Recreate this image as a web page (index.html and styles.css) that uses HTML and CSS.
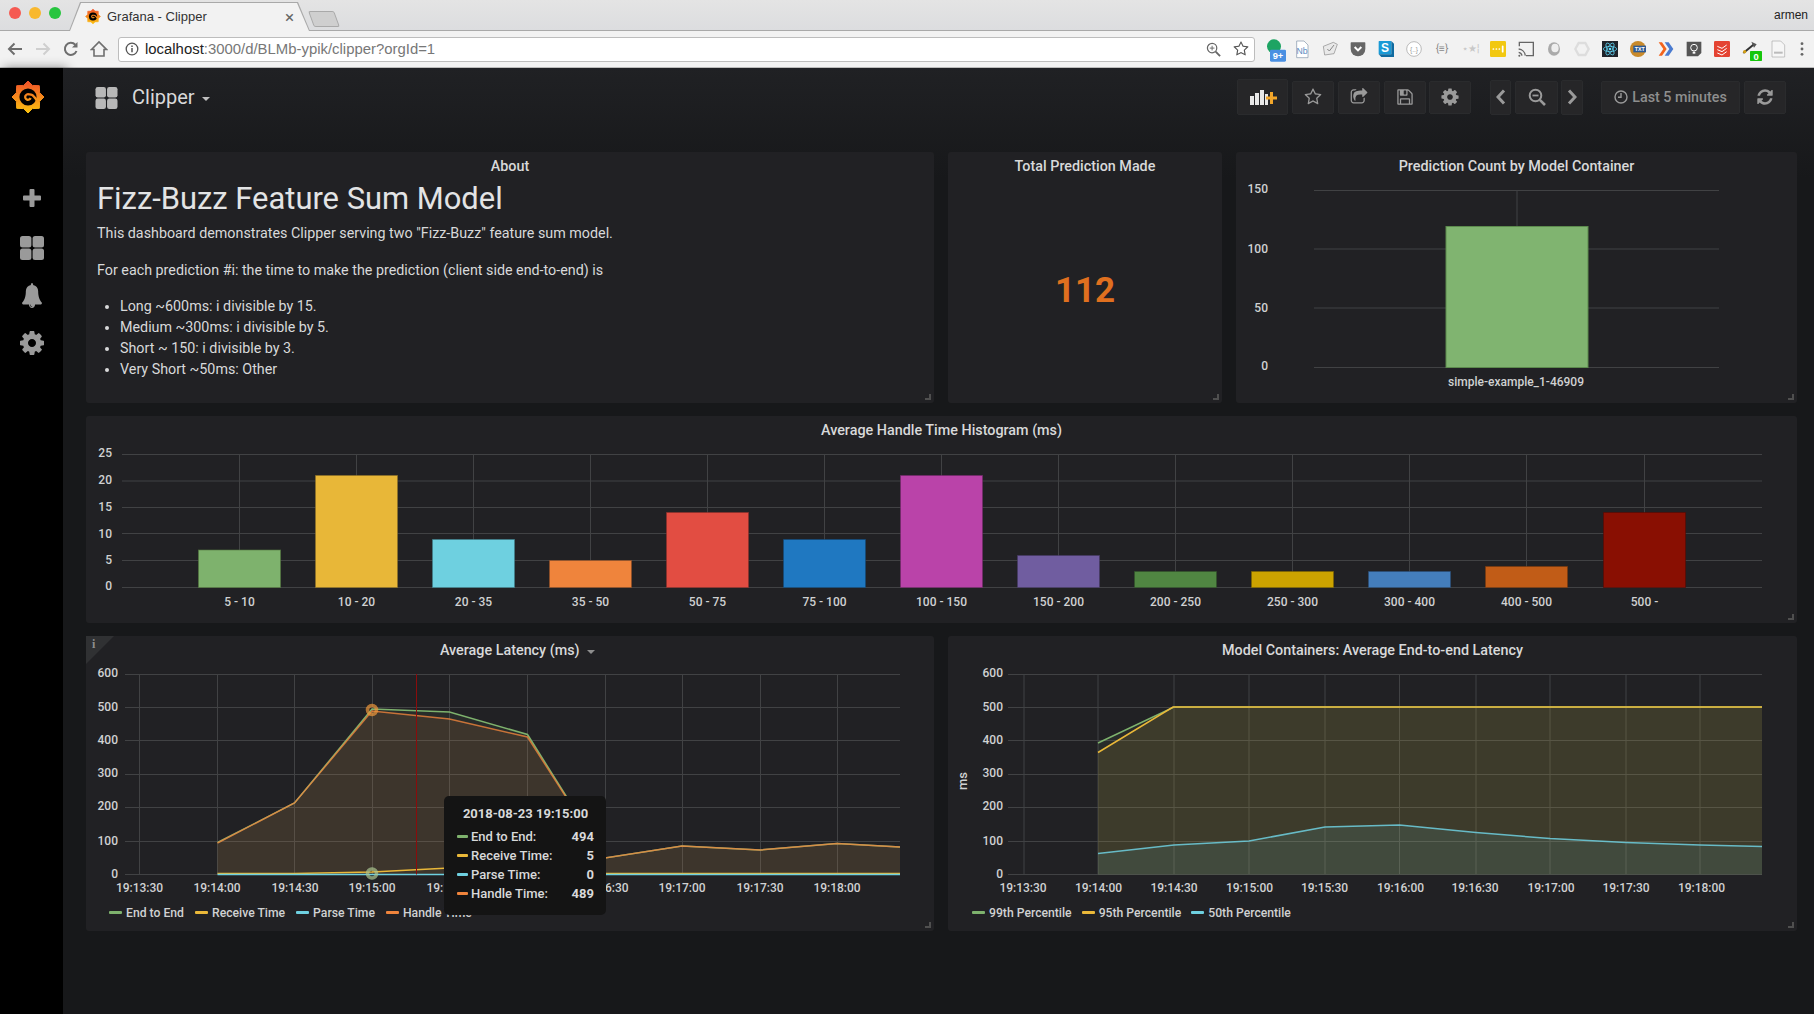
FILE: index.html
```html
<!DOCTYPE html>
<html lang="en">
  <head>
    <meta charset="UTF-8" />
    <title>Grafana - Clipper</title>
    <link rel="stylesheet" href="styles.css">
  </head>
  <body>
    <svg class="defs" width="0" height="0">
      <defs>
        <linearGradient id="logo-grad" gradientUnits="userSpaceOnUse" x1="0" y1="-16" x2="0" y2="16">
          <stop offset="0" stop-color="#f0502a" />
          <stop offset="1" stop-color="#fbc30f" />
        </linearGradient>
        <symbol id="i-logo" viewBox="-17 -17 34 34">
          <polygon fill="url(#logo-grad)" stroke="url(#logo-grad)" stroke-width="1" stroke-linejoin="round" points="0,-16 4.400,-11.600 11.300,-11.300 11.600,-4.400 16,0 11.600,4.400 11.300,11.300 4.400,11.600 0,16 -4.400,11.600 -11.300,11.300 -11.600,4.400 -16,0 -11.600,-4.400 -11.300,-11.300 -4.400,-11.600" />
          <circle r="8.600" fill="#000" />
          <path d="M2.600 1A2.800 2.800 0 1 1 1 -2.600A5.500 5.500 0 0 1 6.200 0A7 7 0 0 1 8.500 3.500" fill="none" stroke="url(#logo-grad)" stroke-width="2.300" />
        </symbol>
        <symbol id="i-cog" viewBox="0 0 1792 1792"><path d="M1152 896q0-106-75-181t-181-75-181 75-75 181 75 181 181 75 181-75 75-181zm512-109v222q0 12-8 23t-20 13l-185 28q-19 54-39 91 35 50 107 138 10 12 10 25t-9 23q-27 37-99 108t-94 71q-12 0-26-9l-138-108q-44 23-91 38-16 136-29 186-7 28-36 28h-222q-14 0-24.500-8.500t-11.500-21.500l-28-184q-49-16-90-37l-141 107q-10 9-25 9-14 0-25-11-126-114-165-168-7-10-7-23 0-12 8-23 15-21 51-66.500t54-70.500q-27-50-41-99l-183-27q-13-2-21-12.500t-8-23.500v-222q0-12 8-23t19-13l186-28q14-46 39-92-40-57-107-138-10-12-10-24 0-10 9-23 26-36 98.500-107.500t94.500-71.500q13 0 26 10l138 107q44-23 91-38 16-136 29-186 7-28 36-28h222q14 0 24.500 8.500t11.500 21.500l28 184q49 16 90 37l142-107q9-9 24-9 13 0 25 10 129 119 165 170 7 8 7 22 0 12-8 23-15 21-51 66.500t-54 70.500q26 50 41 98l183 28q13 2 21 12.500t8 23.500z" /></symbol>
        <symbol id="i-star" viewBox="0 0 1792 1792"><path d="M1201 1004l306-297-422-62-189-382-189 382-422 62 306 297-73 421 378-199 377 199zm527-357q0 22-26 48l-363 354 86 500q1 7 1 20 0 50-41 50-19 0-40-12l-449-236-449 236q-22 12-40 12-21 0-31.500-14.500t-10.500-35.500q0-6 2-20l86-500-364-354q-25-27-25-48 0-37 56-46l502-73 225-455q19-41 49-41t49 41l225 455 502 73q56 9 56 46z" /></symbol>
        <symbol id="i-squares" viewBox="0 0 24 24">
          <rect width="11.400" height="11.400" rx="2.500" />
          <rect x="12.600" width="11.400" height="11.400" rx="2.500" />
          <rect y="12.600" width="11.400" height="11.400" rx="2.500" />
          <rect x="12.600" y="12.600" width="11.400" height="11.400" rx="2.500" />
        </symbol>
      </defs>
    </svg>

    <div class="tabstrip">
      <div class="lights">
        <span class="light light-red"></span>
        <span class="light light-yellow"></span>
        <span class="light light-green"></span>
      </div>
      <div class="tab">
        <svg class="tab-icon"><use href="#i-logo" /></svg>
        <span class="tab-title">Grafana - Clipper</span>
        <span class="tab-close">×</span>
      </div>
      <div class="newtab"></div>
      <span class="profile">armen</span>
    </div>

    <div class="urlbar">
      <svg class="nav-icon" viewBox="0 0 18 18"><path d="M16 9H3M8.500 3.500L3 9l5.500 5.500" fill="none" stroke="#6e6e6e" stroke-width="2" /></svg>
      <svg class="nav-icon" viewBox="0 0 18 18"><path d="M2 9h13M9.500 3.500L15 9l-5.500 5.500" fill="none" stroke="#cfcfcf" stroke-width="2" /></svg>
      <svg class="nav-icon" viewBox="0 0 18 18"><path d="M14.500 11A6 6 0 1 1 13.300 4.800" fill="none" stroke="#6e6e6e" stroke-width="2" /><path d="M15.500 2v5.500H10z" fill="#6e6e6e" /></svg>
      <svg class="nav-icon" viewBox="0 0 18 18"><path d="M1.500 9.500L9 2l7.500 7.500H14V16H4V9.500z" fill="none" stroke="#6e6e6e" stroke-width="1.600" /></svg>
      <div class="omnibox">
        <svg class="omni-info" viewBox="0 0 14 14"><circle cx="7" cy="7" r="5.800" fill="none" stroke="#555" stroke-width="1.300" /><path d="M7 6v4.300M7 3.500v1.400" stroke="#555" stroke-width="1.500" /></svg>
        <span class="omni-url"><b>localhost</b>:3000/d/BLMb-ypik/clipper?orgId=1</span>
        <svg class="omni-zoom" viewBox="0 0 16 16"><circle cx="6.500" cy="6.500" r="5" fill="none" stroke="#666" stroke-width="1.300" /><path d="M10.300 10.300L15 15" stroke="#666" stroke-width="2" /><path d="M4 6.500h5M6.500 4v5" stroke="#666" /></svg>
        <svg class="omni-star"><use href="#i-star" /></svg>
      </div>
      <div class="extensions">
        <svg class="ext" viewBox="0 0 24 24"><circle cx="12" cy="8" r="10.500" fill="#1da463" /><rect x="6" y="13" width="24" height="18" rx="2" fill="#4a90e2" /><text class="ext-label" x="18" y="27" font-size="14">9+</text></svg>
        <svg class="ext" viewBox="0 0 24 24"><path d="M4 0h11l6 6v19H4z" fill="#fff" stroke="#7f93a8" /><text class="ext-label ext-label-blue" x="12" y="19" font-size="13">Nb</text></svg>
        <svg class="ext" viewBox="0 0 24 24"><path d="M2 8l15-6 6 3-5 14-14 2z" fill="#e9e9e9" stroke="#888" /><path d="M8 12l3 3 7-9" fill="none" stroke="#888" stroke-width="1.500" /></svg>
        <svg class="ext" viewBox="0 0 24 24"><path d="M2 2h20a1 1 0 0 1 1 1v9a11 11 0 0 1-22 0V3a1 1 0 0 1 1-1z" fill="#666" /><path d="M7 9l5 5 5-5" fill="none" stroke="#fff" stroke-width="3" /></svg>
        <svg class="ext" viewBox="0 0 24 24"><rect x="1" y="0" width="19" height="20" rx="1" fill="#1a9ad6" /><path d="M1 20h19V0l4 4v20H5z" fill="#0f6ba0" /><text class="ext-label" x="10.500" y="16" font-size="18">S</text></svg>
        <svg class="ext" viewBox="0 0 24 24"><circle cx="12" cy="12" r="11" fill="#fff" stroke="#bbb" stroke-width="1.500" /><text class="ext-label ext-label-gray" x="12" y="16" font-size="10">{..}</text></svg>
        <span class="ext ext-text">{≡}</span>
        <span class="ext ext-text ext-faint">⋆★¦</span>
        <svg class="ext" viewBox="0 0 24 24"><rect x="0" y="0" width="24" height="24" rx="2" fill="#f2c811" /><path d="M5 12h.1M9.500 12h.1M14 12h.1M19 8v8" stroke="#fff" stroke-width="2.600" stroke-linecap="round" /></svg>
        <svg class="ext" viewBox="0 0 24 24"><path d="M2 8V2h21v20H12" fill="none" stroke="#666" stroke-width="2" /><path d="M1 12a11 11 0 0 1 10 10M1 17a6 6 0 0 1 5 5" fill="none" stroke="#666" stroke-width="2" /><circle cx="2" cy="22" r="1.500" fill="#666" /></svg>
        <svg class="ext" viewBox="0 0 24 24"><ellipse cx="12" cy="12" rx="9" ry="10" fill="#aaa" /><ellipse cx="13.500" cy="10.500" rx="5.500" ry="6.500" fill="#eee" /></svg>
        <svg class="ext" viewBox="0 0 24 24"><polygon points="7,3 17,3 22,12 17,21 7,21 2,12" fill="none" stroke="#ddd" stroke-width="3.500" /></svg>
        <svg class="ext" viewBox="0 0 24 24"><rect x="0" y="0" width="24" height="24" fill="#20232a" /><g fill="none" stroke="#61dafb" stroke-width="1.100"><ellipse cx="12" cy="12" rx="10" ry="4" /><ellipse cx="12" cy="12" rx="10" ry="4" transform="rotate(60 12 12)" /><ellipse cx="12" cy="12" rx="10" ry="4" transform="rotate(120 12 12)" /></g><circle cx="12" cy="12" r="2" fill="#61dafb" /></svg>
        <svg class="ext" viewBox="0 0 24 24"><circle cx="12" cy="12" r="12" fill="#c98a2b" /><rect x="5" y="7" width="19" height="10" fill="#2f5b94" /><text class="ext-label" x="14.500" y="15" font-size="8">TXT</text></svg>
        <svg class="ext" viewBox="0 0 24 24"><path d="M1 2l7 10-7 10h5l7-10-7-10z" fill="#f2631c" /><path d="M10 2l7 10-7 10h6l7-10-7-10z" fill="#4a7bd0" /></svg>
        <svg class="ext" viewBox="0 0 24 24"><path d="M1 1h22v17l-5 5H1z" fill="#555" /><circle cx="12" cy="10" r="5" fill="none" stroke="#fff" stroke-width="1.500" /><path d="M10 16h4v3h-4z" fill="#fff" /></svg>
        <svg class="ext" viewBox="0 0 24 24"><rect x="0" y="0" width="24" height="24" rx="2" fill="#e44332" /><path d="M5 8l7 3 7-5M5 13l7 3 7-5M5 18l7 3 7-5" fill="none" stroke="#fff" stroke-width="1.500" /></svg>
        <svg class="ext" viewBox="0 0 24 24"><path d="M2 18L18 5" stroke="#333" stroke-width="3" /><path d="M14 1l8 4-4 5z" fill="#555" /><circle cx="4" cy="16" r="2.500" fill="#d4a017" /><rect x="12" y="15" width="18" height="15" rx="1" fill="#16c60c" /><text class="ext-label" x="21" y="28" font-size="14">0</text></svg>
        <svg class="ext" viewBox="0 0 24 24"><path d="M3 0h13l6 6v18H3z" fill="#f6f6f6" stroke="#aaa" /><rect x="6" y="16" width="13" height="3" fill="#bbb" /></svg>
        <svg class="ext-menu" viewBox="0 0 4 18"><circle cx="2" cy="3" r="1.600" fill="#666" /><circle cx="2" cy="9" r="1.600" fill="#666" /><circle cx="2" cy="15" r="1.600" fill="#666" /></svg>
      </div>
    </div>

    <div class="app">
      <aside class="sidemenu">
        <svg class="side-logo"><use href="#i-logo" /></svg>
        <svg class="side-icon side-plus" viewBox="0 0 18 18"><path d="M7.500 1h3v6.500H17v3h-6.500V17h-3v-6.500H1v-3h6.500z" stroke="#9a9a9a" stroke-width="2" stroke-linejoin="round" /></svg>
        <svg class="side-icon side-squares"><use href="#i-squares" /></svg>
        <svg class="side-icon side-bell" viewBox="64 0 1664 1792" preserveAspectRatio="none"><path d="M912 1696q0-16-16-16-59 0-101.500-42.500t-42.500-101.500q0-16-16-16t-16 16q0 73 51.500 124.500t124.500 51.500q16 0 16-16zm816-288q0 52-38 90t-90 38h-448q0 106-75 181t-181 75-181-75-75-181h-448q-52 0-90-38t-38-90q50-42 91-88t85-119.500 74.500-158.500 50-206 19.500-260q0-152 117-282.500t307-158.500q-8-19-8-39 0-40 28-68t68-28 68 28 28 68q0 20-8 39 190 28 307 158.500t117 282.500q0 139 19.500 260t50 206 74.500 158.500 85 119.500 91 88z" /></svg>
        <svg class="side-icon side-cog"><use href="#i-cog" /></svg>
      </aside>

      <main class="main">
        <header class="navbar">
          <svg class="nav-squares"><use href="#i-squares" /></svg>
          <span class="dash-title">Clipper</span>
          <span class="caret"></span>
          <div class="nav-actions">
            <button class="btn btn-add">
              <svg width="28" height="16" viewBox="0 0 28 16"><path d="M1 7h4v9H1zM6 4h4v12H6zM11 1h4v15h-4zM16 5h3v11h-3z" fill="#e8e8e8" /><path d="M21 3h3v4.500h4v3h-4V15h-3v-4.500h-4v-3h4z" fill="#f2a62a" /></svg>
            </button>
            <button class="btn btn-star"><svg class="btn-icon"><use href="#i-star" /></svg></button>
            <button class="btn btn-share"><svg class="btn-icon" viewBox="0 0 1792 1792"><path d="M1472 989v259q0 119-84.500 203.500t-203.500 84.500h-832q-119 0-203.500-84.500t-84.500-203.500v-832q0-119 84.500-203.500t203.500-84.500h255q13 0 22.500 9.500t9.500 22.500q0 27-26 32-77 26-133 60-10 4-16 4h-112q-66 0-113 47t-47 113v832q0 66 47 113t113 47h832q66 0 113-47t47-113v-214q0-19 18-29 28-13 54-37 16-16 35-8 21 9 21 29zm237-496l-384 384q-18 19-45 19-12 0-25-5-39-17-39-59v-192h-160q-323 0-438 131-119 137-74 473 3 23-20 34-8 2-12 2-16 0-26-13-10-14-21-31t-39.500-68.500-49.500-99.500-38.500-114-17.500-122q0-49 3.500-91t14-90 28-88 47-81.500 68.500-74 94.500-61.500 124.500-48.500 159.500-30.500 196.500-11h160v-192q0-42 39-59 13-5 25-5 26 0 45 19l384 384q19 19 19 45t-19 45z" /></svg></button>
            <button class="btn btn-save"><svg class="btn-icon" viewBox="0 0 1792 1792"><path d="M512 1536h768v-384h-768v384zm896 0h128v-896q0-14-10-38.500t-20-34.500l-281-281q-10-10-34-20t-39-10v416q0 40-28 68t-68 28h-576q-40 0-68-28t-28-68v-416h-128v1280h128v-416q0-40 28-68t68-28h832q40 0 68 28t28 68v416zm-384-928v-320q0-13-9.500-22.500t-22.500-9.500h-192q-13 0-22.500 9.500t-9.500 22.500v320q0 13 9.500 22.500t22.500 9.500h192q13 0 22.500-9.500t9.500-22.500zm640 32v928q0 40-28 68t-68 28h-1344q-40 0-68-28t-28-68v-1344q0-40 28-68t68-28h928q40 0 88 20t76 48l280 280q28 28 48 76t20 88z" /></svg></button>
            <button class="btn btn-cog"><svg class="btn-icon btn-icon-big"><use href="#i-cog" /></svg></button>
            <button class="btn btn-prev"><svg width="10" height="16" viewBox="0 0 10 16"><path d="M8 1.500L2 8l6 6.500" fill="none" stroke="#9a9a9a" stroke-width="3" /></svg></button>
            <button class="btn btn-zoom"><svg width="18" height="18" viewBox="0 0 18 18"><circle cx="7.500" cy="7.500" r="5.800" fill="none" stroke="#9a9a9a" stroke-width="2" /><path d="M11.800 11.800L17 17" stroke="#9a9a9a" stroke-width="2.600" /><path d="M4.500 7.500h6" stroke="#9a9a9a" stroke-width="1.800" /></svg></button>
            <button class="btn btn-next"><svg width="10" height="16" viewBox="0 0 10 16"><path d="M2 1.500L8 8l-6 6.500" fill="none" stroke="#9a9a9a" stroke-width="3" /></svg></button>
            <button class="btn btn-time">
              <svg width="14" height="14" viewBox="0 0 14 14"><circle cx="7" cy="7" r="6" fill="none" stroke="#9a9a9a" stroke-width="1.400" /><path d="M7 3v4.300H4" fill="none" stroke="#9a9a9a" stroke-width="1.400" /></svg>
              Last 5 minutes
            </button>
            <button class="btn btn-refresh"><svg class="btn-icon" viewBox="0 0 1792 1792"><path d="M1639 1056q0 5-1 7-64 268-268 434.500t-478 166.500q-146 0-282.500-55t-243.500-157l-129 129q-19 19-45 19t-45-19-19-45v-448q0-26 19-45t45-19h448q26 0 45 19t19 45-19 45l-137 137q71 66 161 102t187 36q134 0 250-65t186-179q11-17 53-117 8-23 30-23h192q13 0 22.500 9.500t9.500 22.500zm25-800v448q0 26-19 45t-45 19h-448q-26 0-45-19t-19-45 19-45l138-138q-148-137-349-137-134 0-250 65t-186 179q-11 17-53 117-8 23-30 23h-199q-13 0-22.500-9.500t-9.500-22.500v-7q65-268 270-434.500t480-166.500q146 0 284 55.500t245 156.500l130-129q19-19 45-19t45 19 19 45z" /></svg></button>
          </div>
        </header>

        <div class="dashboard">
          <div class="row row-top">
            <section class="panel">
              <h3 class="panel-title">About</h3>
              <div class="about">
                <h1>Fizz-Buzz Feature Sum Model</h1>
                <p>This dashboard demonstrates Clipper serving two "Fizz-Buzz" feature sum model.</p>
                <p>For each prediction #i: the time to make the prediction (client side end-to-end) is</p>
                <ul>
                  <li>Long ~600ms: i divisible by 15.</li>
                  <li>Medium ~300ms: i divisible by 5.</li>
                  <li>Short ~ 150: i divisible by 3.</li>
                  <li>Very Short ~50ms: Other</li>
                </ul>
              </div>
            </section>

            <section class="panel panel-stat">
              <h3 class="panel-title">Total Prediction Made</h3>
              <div class="stat-value">112</div>
            </section>

            <section class="panel">
              <h3 class="panel-title">Prediction Count by Model Container</h3>
              <svg class="chart chart-count" viewBox="1236 180 561 210">
                <path class="grid" d="M1314 190.500H1719M1314 249H1719M1314 308H1719M1314 367.500H1719M1517 190.500V367" />
                <rect x="1446" y="226.500" width="142" height="141" fill="#80b470" stroke="#5c8a4d" />
                <text class="tick" x="1268" y="193" text-anchor="end">150</text>
                <text class="tick" x="1268" y="253" text-anchor="end">100</text>
                <text class="tick" x="1268" y="312" text-anchor="end">50</text>
                <text class="tick" x="1268" y="370" text-anchor="end">0</text>
                <text class="tick" x="1516" y="386" text-anchor="middle">simple-example_1-46909</text>
              </svg>
            </section>
          </div>

          <div class="row row-hist">
            <section class="panel">
              <h3 class="panel-title">Average Handle Time Histogram (ms)</h3>
              <svg class="chart chart-hist" viewBox="86 440 1711 183">
                <path class="grid" d="M122 454.500H1762M122 481H1762M122 507.500H1762M122 533.500H1762M122 560.500H1762M122 587.500H1762" />
                <path class="grid" d="M239.500 454V587M356.500 454V587M473.500 454V587M590.500 454V587M707.500 454V587M824.500 454V587M941.500 454V587M1058.500 454V587M1175.500 454V587M1292.500 454V587M1409.500 454V587M1526.500 454V587M1644.500 454V587" />
                <g stroke-opacity=".6">
                  <rect x="198.500" y="550" width="82" height="37.500" fill="#7eb26d" stroke="#55783f" />
                  <rect x="315.500" y="475.500" width="82" height="112" fill="#e8b738" stroke="#8f7226" />
                  <rect x="432.500" y="539.500" width="82" height="48" fill="#6ed0e0" stroke="#40808c" />
                  <rect x="549.500" y="560.500" width="82" height="27" fill="#ef843c" stroke="#8f4f24" />
                  <rect x="666.500" y="512.500" width="82" height="75" fill="#e24d42" stroke="#8f3029" />
                  <rect x="783.500" y="539.500" width="82" height="48" fill="#1f78c1" stroke="#134a78" />
                  <rect x="900.500" y="475.500" width="82" height="112" fill="#ba43a9" stroke="#752a6a" />
                  <rect x="1017.500" y="555.500" width="82" height="32" fill="#705da0" stroke="#463a64" />
                  <rect x="1134.500" y="571.500" width="82" height="16" fill="#508642" stroke="#325429" />
                  <rect x="1251.500" y="571.500" width="82" height="16" fill="#cca300" stroke="#806600" />
                  <rect x="1368.500" y="571.500" width="82" height="16" fill="#447ebc" stroke="#2a4f76" />
                  <rect x="1485.500" y="566.500" width="82" height="21" fill="#c15c17" stroke="#793a0e" />
                  <rect x="1603.500" y="512.500" width="82" height="75" fill="#890f02" stroke="#560901" />
                </g>
                <g class="tick" text-anchor="end">
                  <text x="112" y="457">25</text>
                  <text x="112" y="484">20</text>
                  <text x="112" y="511">15</text>
                  <text x="112" y="538">10</text>
                  <text x="112" y="564">5</text>
                  <text x="112" y="590">0</text>
                </g>
                <g class="tick" text-anchor="middle">
                  <text x="239.500" y="606">5 - 10</text>
                  <text x="356.500" y="606">10 - 20</text>
                  <text x="473.500" y="606">20 - 35</text>
                  <text x="590.500" y="606">35 - 50</text>
                  <text x="707.500" y="606">50 - 75</text>
                  <text x="824.500" y="606">75 - 100</text>
                  <text x="941.500" y="606">100 - 150</text>
                  <text x="1058.500" y="606">150 - 200</text>
                  <text x="1175.500" y="606">200 - 250</text>
                  <text x="1292.500" y="606">250 - 300</text>
                  <text x="1409.500" y="606">300 - 400</text>
                  <text x="1526.500" y="606">400 - 500</text>
                  <text x="1644.500" y="606">500 -</text>
                </g>
              </svg>
            </section>
          </div>

          <div class="row row-bottom">
            <section class="panel">
              <span class="corner-info"><span class="corner-i">i</span></span>
              <h3 class="panel-title">Average Latency (ms) <span class="title-caret"></span></h3>
              <svg class="chart chart-line" viewBox="86 664 848 232">
                <path class="grid" d="M125 674.500H900M125 707.500H900M125 740.500H900M125 774.500H900M125 807.500H900M125 841.500H900M125 874.500H900" />
                <path class="grid" d="M139.500 674V874M217.500 674V874M294.500 674V874M372.500 674V874M449.500 674V874M527.500 674V874M605.500 674V874M682.500 674V874M760.500 674V874M837.500 674V874" />
                <path d="M217.500 842.500L294.500 803L372 709L449.500 712L527.500 734.500L605 858L682 846L760 850L837 843.500L900 847V874.500H217.500z" fill="#7eb26d" fill-opacity=".08" />
                <path d="M217.500 843L294.500 803L372 711L449.500 719L527.500 737L605 858L682 846L760 850L837 843.500L900 847V874.500H217.500z" fill="#ef843c" fill-opacity=".11" />
                <path d="M217.500 842.500L294.500 803L372 709L449.500 712L527.500 734.500L605 858L682 846L760 850L837 843.500L900 847" fill="none" stroke="#7eb26d" stroke-width="1.500" />
                <path d="M217.500 873.500L294.500 873.500L372 872L449.500 868L527.500 866L605 873.500H900" fill="none" stroke="#eab839" stroke-width="1.500" />
                <path d="M217.500 874.500H900" fill="none" stroke="#6ed0e0" stroke-width="1.500" />
                <path d="M217.500 843L294.500 803L372 711L449.500 719L527.500 737L605 858L682 846L760 850L837 843.500L900 847" fill="none" stroke="#ef843c" stroke-opacity=".8" stroke-width="1.500" />
                <path d="M416.500 674V874.500" stroke="#8a0c0c" />
                <circle cx="372" cy="710" r="4.500" fill="none" stroke="#eab839" stroke-opacity=".45" stroke-width="3.500" />
                <circle cx="372" cy="710" r="4.500" fill="none" stroke="#ef843c" stroke-opacity=".45" stroke-width="3.500" />
                <circle cx="372" cy="873.500" r="4.500" fill="none" stroke="#6ed0e0" stroke-opacity=".55" stroke-width="3.500" />
                <circle cx="372" cy="873.500" r="4.500" fill="none" stroke="#eab839" stroke-opacity=".35" stroke-width="3.500" />
                <g class="tick" text-anchor="end">
                  <text x="118" y="677">600</text>
                  <text x="118" y="711">500</text>
                  <text x="118" y="744">400</text>
                  <text x="118" y="777">300</text>
                  <text x="118" y="810">200</text>
                  <text x="118" y="845">100</text>
                  <text x="118" y="878">0</text>
                </g>
                <g class="tick" text-anchor="middle">
                  <text x="139.500" y="892">19:13:30</text>
                  <text x="217" y="892">19:14:00</text>
                  <text x="295" y="892">19:14:30</text>
                  <text x="372" y="892">19:15:00</text>
                  <text x="450" y="892">19:15:30</text>
                  <text x="527.500" y="892">19:16:00</text>
                  <text x="605" y="892">19:16:30</text>
                  <text x="682" y="892">19:17:00</text>
                  <text x="760" y="892">19:17:30</text>
                  <text x="837" y="892">19:18:00</text>
                </g>
              </svg>
              <div class="legend legend-left">
                <span class="legend-item"><i class="dash dash-green"></i>End to End</span>
                <span class="legend-item"><i class="dash dash-yellow"></i>Receive Time</span>
                <span class="legend-item"><i class="dash dash-cyan"></i>Parse Time</span>
                <span class="legend-item"><i class="dash dash-orange"></i>Handle Time</span>
              </div>
              <div class="graph-tooltip">
                <div class="tooltip-date">2018-08-23 19:15:00</div>
                <div class="tooltip-row"><i class="dash dash-green"></i><span class="tooltip-name">End to End:</span><b>494</b></div>
                <div class="tooltip-row"><i class="dash dash-yellow"></i><span class="tooltip-name">Receive Time:</span><b>5</b></div>
                <div class="tooltip-row"><i class="dash dash-cyan"></i><span class="tooltip-name">Parse Time:</span><b>0</b></div>
                <div class="tooltip-row"><i class="dash dash-orange"></i><span class="tooltip-name">Handle Time:</span><b>489</b></div>
              </div>
            </section>

            <section class="panel">
              <h3 class="panel-title">Model Containers: Average End-to-end Latency</h3>
              <svg class="chart chart-line" viewBox="948 664 849 232">
                <path class="grid" d="M1008 674.500H1762M1008 707.500H1762M1008 740.500H1762M1008 774.500H1762M1008 807.500H1762M1008 841.500H1762M1008 874.500H1762" />
                <path class="grid" d="M1024 674V874M1098 674V874M1174 674V874M1249 674V874M1325 674V874M1399.500 674V874M1476 674V874M1550 674V874M1626 674V874M1700 674V874" />
                <path d="M1098 743L1174 707H1762V874.500H1098z" fill="#7eb26d" fill-opacity=".08" />
                <path d="M1098 752.500L1173 707H1762V874.500H1098z" fill="#eab839" fill-opacity=".11" />
                <path d="M1098 853.500L1174 845L1249 841L1325 827L1399.500 825L1476 832.500L1550 838.500L1626 842.500L1700 845L1762 846.500V874.500H1098z" fill="#6ed0e0" fill-opacity=".1" />
                <path d="M1098 743L1174 707H1762" fill="none" stroke="#7eb26d" stroke-width="1.500" />
                <path d="M1098 752.500L1173 707H1762" fill="none" stroke="#eab839" stroke-width="1.500" />
                <path d="M1098 853.500L1174 845L1249 841L1325 827L1399.500 825L1476 832.500L1550 838.500L1626 842.500L1700 845L1762 846.500" fill="none" stroke="#6ed0e0" stroke-opacity=".85" stroke-width="1.500" />
                <text class="tick tick-unit" transform="translate(967 781) rotate(-90)" text-anchor="middle">ms</text>
                <g class="tick" text-anchor="end">
                  <text x="1003" y="677">600</text>
                  <text x="1003" y="711">500</text>
                  <text x="1003" y="744">400</text>
                  <text x="1003" y="777">300</text>
                  <text x="1003" y="810">200</text>
                  <text x="1003" y="845">100</text>
                  <text x="1003" y="878">0</text>
                </g>
                <g class="tick" text-anchor="middle">
                  <text x="1023" y="892">19:13:30</text>
                  <text x="1098.500" y="892">19:14:00</text>
                  <text x="1174" y="892">19:14:30</text>
                  <text x="1249.500" y="892">19:15:00</text>
                  <text x="1324.500" y="892">19:15:30</text>
                  <text x="1400.500" y="892">19:16:00</text>
                  <text x="1475" y="892">19:16:30</text>
                  <text x="1551" y="892">19:17:00</text>
                  <text x="1626" y="892">19:17:30</text>
                  <text x="1701.500" y="892">19:18:00</text>
                </g>
              </svg>
              <div class="legend legend-right">
                <span class="legend-item"><i class="dash dash-green"></i>99th Percentile</span>
                <span class="legend-item"><i class="dash dash-yellow"></i>95th Percentile</span>
                <span class="legend-item"><i class="dash dash-cyan"></i>50th Percentile</span>
              </div>
            </section>
          </div>
        </div>
      </main>
    </div>
  </body>
</html>
```

FILE: styles.css
```css
* {
  box-sizing: border-box;
}

html,
body {
  height: 100%;
}

body {
  margin: 0;
  overflow: hidden;
  font-family: Roboto, "Liberation Sans", sans-serif;
  font-size: 14px;
  color: #d8d9da;
  background-color: #161719;
}

.defs {
  display: block;
  height: 0;
}

/* browser chrome */
.tabstrip {
  display: flex;
  align-items: flex-end;
  height: 31px;
  background: linear-gradient(#e4e4e4, #dcdddf);
  border-bottom: 1px solid #a9a9a9;
}

.lights {
  display: flex;
  gap: 8px;
  align-self: center;
  margin: 0 0 4px 9px;
}

.light {
  width: 12px;
  height: 12px;
  border-radius: 50%;
}

.light-red {
  background-color: #f55a52;
}

.light-yellow {
  background-color: #f8b82e;
}

.light-green {
  background-color: #27c53f;
}

.tab {
  position: relative;
  z-index: 0;
  display: flex;
  align-items: center;
  width: 241px;
  height: 29px;
  margin: 0 0 -1px 8px;
  padding: 0 0 0 16px;
}

.tab::before,
.tab::after {
  content: "";
  position: absolute;
  z-index: -1;
  clip-path: polygon(0 100%, 11px 0, calc(100% - 12px) 0, 100% 100%);
}

.tab::before {
  inset: 0;
  background-color: #a9a9a9;
}

.tab::after {
  inset: 1px 1px 0;
  background-color: #f2f2f2;
}

.tab-icon {
  width: 16px;
  height: 17px;
  margin-right: 6px;
}

.tab-title {
  flex: 1;
  font-family: "Liberation Sans", sans-serif;
  font-size: 13px;
  color: #333;
}

.tab-close {
  margin-right: 16px;
  font-size: 17px;
  color: #666;
}

.newtab {
  width: 26px;
  height: 16px;
  margin: 0 0 3px 1px;
  background-color: #cfcfcf;
  border: 1px solid #a9a9a9;
  border-radius: 2px;
  transform: skewX(20deg);
}

.profile {
  margin-left: auto;
  align-self: center;
  padding: 0 6px 0 0;
  font-family: "Liberation Sans", sans-serif;
  font-size: 12px;
  color: #222;
}

.urlbar {
  display: flex;
  align-items: center;
  height: 37px;
  padding: 0 0 0 6px;
  background-color: #f2f2f2;
  border-bottom: 1px solid #bcbcbc;
}

.nav-icon {
  width: 18px;
  height: 18px;
  margin-right: 10px;
}

.omnibox {
  display: flex;
  align-items: center;
  width: 1137px;
  height: 25px;
  padding: 0 5px 0 6px;
  background-color: #fff;
  border: 1px solid #bdbdbd;
  border-radius: 3px;
}

.omni-info {
  width: 14px;
  height: 14px;
  margin-right: 6px;
}

.omni-url {
  flex: 1;
  font-family: "Liberation Sans", sans-serif;
  font-size: 14.900px;
  color: #777;
}

.omni-url b {
  font-weight: 400;
  color: #222;
}

.omni-zoom {
  width: 15px;
  height: 15px;
  margin-right: 12px;
}

.omni-star {
  width: 16px;
  height: 16px;
  fill: #555;
}

.extensions {
  display: flex;
  align-items: center;
  gap: 12px;
  margin-left: 11px;
}

.ext {
  flex: none;
  width: 16px;
  height: 16px;
  overflow: visible;
}

.ext-label {
  font-family: "Liberation Sans", sans-serif;
  font-weight: 700;
  text-anchor: middle;
  fill: #fff;
}

.ext-label-blue {
  font-weight: 400;
  fill: #5b8bc0;
}

.ext-label-gray {
  font-weight: 400;
  fill: #999;
}

.ext-text {
  font-size: 10px;
  line-height: 16px;
  text-align: center;
  white-space: nowrap;
  color: #888;
}

.ext-faint {
  color: #c8c8c8;
}

.ext-menu {
  width: 4px;
  height: 16px;
  margin-left: 2px;
}

/* grafana */
.app {
  display: flex;
  height: calc(100% - 68px);
}

.sidemenu {
  flex: none;
  display: flex;
  flex-direction: column;
  align-items: center;
  width: 63px;
  background-color: #000;
  box-shadow: 4px 0 10px rgba(0, 0, 0, 0.45);
}

.side-logo {
  width: 34px;
  height: 36px;
  margin: 11px 7px 0 0;
}

.side-icon {
  fill: #9a9a9a;
}

.side-plus {
  width: 18px;
  height: 18px;
  margin-top: 74px;
}

.side-squares {
  width: 24px;
  height: 24px;
  margin-top: 29px;
}

.side-bell {
  width: 20px;
  height: 25px;
  margin-top: 23px;
}

.side-cog {
  width: 28px;
  height: 28px;
  margin-top: 21px;
}

.main {
  flex: 1;
  min-width: 0;
  padding: 0 17px 0 23px;
  background: linear-gradient(#202124, #17181a 110px);
}

.navbar {
  display: flex;
  align-items: center;
  height: 58px;
  padding-left: 9px;
}

.nav-squares {
  width: 23px;
  height: 22px;
  margin-top: 2px;
  fill: #b8b8b8;
}

.dash-title {
  margin-left: 14px;
  font-size: 20px;
  color: #d8d9da;
}

.caret {
  width: 0;
  height: 0;
  margin: 4px 0 0 7px;
  border-style: solid;
  border-width: 4px 4px 0;
  border-color: #c0c0c0 transparent transparent;
}

.nav-actions {
  display: flex;
  align-items: center;
  margin-left: auto;
  margin-right: 7px;
}

.btn {
  display: flex;
  align-items: center;
  justify-content: center;
  height: 33px;
  padding: 0;
  font-family: inherit;
  font-size: 14.300px;
  font-weight: 500;
  color: #8e8e8e;
  background-color: #262628;
  border: 1px solid #2a2b2d;
  border-radius: 2px;
}

.btn-icon {
  width: 18px;
  height: 18px;
  fill: #9a9a9a;
}

.btn-icon-big {
  width: 20px;
  height: 20px;
}

.btn-add {
  width: 51px;
  height: 36px;
  margin-right: 4px;
}

.btn-star,
.btn-share,
.btn-save,
.btn-cog,
.btn-refresh {
  width: 42px;
  margin-right: 4px;
}

.btn-save {
  margin-right: 3px;
}

.btn-cog {
  margin-right: 19px;
}

.btn-prev,
.btn-next {
  width: 21px;
  height: 35px;
}

.btn-prev {
  margin-right: 4px;
}

.btn-zoom {
  width: 43px;
  margin-right: 3px;
}

.btn-next {
  width: 22px;
  margin-right: 18px;
}

.btn-time {
  gap: 4px;
  width: 139px;
  margin-right: 4px;
}

.dashboard {
  display: flex;
  flex-direction: column;
  gap: 13px;
  margin-top: 26px;
}

.row {
  display: flex;
  gap: 14px;
}

.row > .panel {
  flex: 1;
  min-width: 0;
}

.row-top > .panel:nth-child(1) {
  flex: none;
  width: 848px;
}

.row-top > .panel:nth-child(2) {
  flex: none;
  width: 274px;
}

.row-top .panel {
  height: 251px;
}

.row-hist .panel {
  height: 207px;
}

.row-bottom > .panel:nth-child(1) {
  flex: none;
  width: 848px;
}

.row-bottom .panel {
  height: 295px;
}

.panel {
  position: relative;
  background-color: #212124;
  border-radius: 3px;
}

.panel::after {
  content: "";
  position: absolute;
  right: 3px;
  bottom: 3px;
  width: 4px;
  height: 4px;
  border-right: 2px solid #4f4f4f;
  border-bottom: 2px solid #4f4f4f;
}

.panel-title {
  margin: 0;
  padding-top: 6px;
  height: 28px;
  font-size: 14.350px;
  font-weight: 500;
  line-height: 17px;
  text-align: center;
  color: #d8d9da;
}

.row-hist .panel-title {
  height: 24px;
}

.title-caret {
  display: inline-block;
  width: 0;
  height: 0;
  margin: 0 -15px 1px 4px;
  border-style: solid;
  border-width: 4px 4px 0;
  border-color: #8e8e8e transparent transparent;
}

.about {
  padding: 0 11px;
}

.about h1 {
  margin: 1px 0 0;
  font-size: 30.900px;
  font-weight: 400;
  line-height: 36px;
  color: #e3e4e5;
}

.about p {
  margin: 8px 0 20px;
  font-size: 14.300px;
  line-height: 17px;
}

.about ul {
  margin: -3px 0 0;
  padding-left: 23px;
}

.about li {
  font-size: 14.300px;
  line-height: 21px;
}

.panel-stat .stat-value {
  margin-top: 90px;
  font-size: 35px;
  font-weight: 700;
  line-height: 42px;
  text-align: center;
  color: #e0701f;
}

.chart {
  display: block;
  overflow: visible;
}

.chart-count {
  width: 561px;
  height: 210px;
}

.chart-hist {
  width: 1711px;
  height: 183px;
}

.chart-line {
  width: 100%;
  height: 232px;
}

.grid {
  fill: none;
  stroke: #414244;
  stroke-width: 1;
}

.tick,
.tick text {
  font-family: Roboto, "Liberation Sans", sans-serif;
  font-size: 12px;
  font-weight: 500;
  fill: #d0d1d2;
}

.tick-unit {
  font-size: 13px;
}

.legend {
  display: flex;
  height: 24px;
  font-size: 12.200px;
  font-weight: 500;
  line-height: 16px;
  color: #d0d1d2;
}

.legend-left {
  gap: 11px;
  padding: 9px 0 0 23px;
}

.legend-right {
  gap: 10px;
  padding: 9px 0 0 24px;
}

.legend-item {
  display: flex;
  align-items: center;
  white-space: nowrap;
}

.dash {
  flex: none;
  width: 13px;
  height: 3px;
  margin-right: 4px;
  border-radius: 1px;
}

.dash-green {
  background-color: #7eb26d;
}

.dash-yellow {
  background-color: #eab839;
}

.dash-cyan {
  background-color: #6ed0e0;
}

.dash-orange {
  background-color: #ef843c;
}

.corner-info {
  position: absolute;
  left: 0;
  top: 0;
  width: 28px;
  height: 28px;
  background-color: #303133;
  clip-path: polygon(0 0, 100% 0, 0 100%);
}

.corner-i {
  position: absolute;
  left: 6px;
  top: 1px;
  font-family: "Liberation Serif", serif;
  font-size: 12px;
  font-weight: 700;
  color: #8e8e8e;
}

.graph-tooltip {
  position: absolute;
  left: 358px;
  top: 160px;
  width: 162px;
  height: 119px;
  padding: 8px 12px 0 13px;
  font-size: 13px;
  font-weight: 500;
  background-color: #141414;
  border-radius: 5px;
}

.tooltip-date {
  height: 23px;
  line-height: 20px;
  text-align: center;
  font-weight: 700;
  color: #d8d9da;
}

.tooltip-row {
  display: flex;
  align-items: center;
  height: 19px;
}

.tooltip-row .dash {
  width: 11px;
  margin-right: 3px;
}

.tooltip-name {
  flex: 1;
}

.tooltip-row b {
  font-weight: 700;
}
```
